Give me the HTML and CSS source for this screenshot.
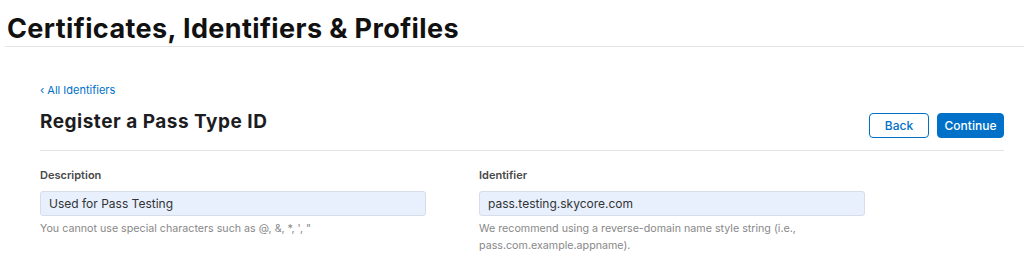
FILE: index.html
```html
<!DOCTYPE html>
<html lang="en">
<head>
<meta charset="utf-8">
<title>Register a Pass Type ID</title>
<link rel="stylesheet" href="styles.css">
</head>
<body>
<header class="top">
  <h1 class="top-title">Certificates, Identifiers &amp; Profiles</h1>
</header>
<main class="content">
  <a class="back-link" href="#">&lsaquo; All Identifiers</a>
  <div class="page-head">
    <h2 class="page-title">Register a Pass Type ID</h2>
    <div class="actions">
      <button class="btn btn-secondary" type="button">Back</button>
      <button class="btn btn-primary" type="button">Continue</button>
    </div>
  </div>
  <div class="form-grid">
    <div class="field">
      <label class="field-label">Description</label>
      <div class="field-input">Used for Pass Testing</div>
      <p class="field-help">You cannot use special characters such as @, &amp;, *, ', "</p>
    </div>
    <div class="field">
      <label class="field-label">Identifier</label>
      <div class="field-input">pass.testing.skycore.com</div>
      <p class="field-help">We recommend using a reverse-domain name style string (i.e.,<br>pass.com.example.appname).</p>
    </div>
  </div>
</main>
</body>
</html>
```
FILE: styles.css
```css
* { box-sizing: border-box; }
html, body { margin: 0; padding: 0; background: #fff; }
body {
  font-family: Inter, "Liberation Sans", Arial, sans-serif;
  color: #1d1d1f;
  width: 1024px;
  height: 262px;
  overflow: hidden;
}
.top {
  margin-left: 5px;
  border-bottom: 1px solid #e3e3e3;
  height: 47px;
  padding-top: 13px;
}
.top-title {
  margin: 0 0 0 2px;
  font-size: 27px;
  line-height: 32px;
  font-weight: 700;
  letter-spacing: 0.4px;
  color: #111;
}
.content {
  padding: 0 20px 0 40px;
}
.back-link {
  display: block;
  margin-top: 36px;
  font-size: 11px;
  line-height: 14px;
  color: #0070c9;
  text-decoration: none;
}
.page-head {
  display: flex;
  justify-content: space-between;
  align-items: flex-end;
  margin-top: 13px;
  padding-bottom: 12px;
  border-bottom: 1px solid #e3e3e3;
}
.page-title {
  margin: 0 0 4px;
  font-size: 19px;
  line-height: 24px;
  font-weight: 700;
  letter-spacing: 0.5px;
  color: #1d1d1f;
}
.actions {
  display: flex;
  gap: 8px;
}
.btn {
  font-family: inherit;
  font-size: 12px;
  font-weight: 500;
  height: 25px;
  border-radius: 4px;
  cursor: pointer;
  padding: 0;
}
.btn-secondary {
  width: 60px;
  background: #fff;
  color: #0070c9;
  border: 1px solid #0070c9;
}
.btn-primary {
  width: 67px;
  background: #0070c9;
  color: #fff;
  border: 1px solid #0070c9;
}
.form-grid {
  display: grid;
  grid-template-columns: 439px 385px;
  margin-top: 17px;
}
.field-label {
  display: block;
  font-size: 11px;
  line-height: 14px;
  font-weight: 600;
  color: #494949;
}
.field-input {
  margin-top: 9px;
  width: 386px;
  height: 25px;
  padding: 0 8px;
  background: #e8f0fe;
  border: 1px solid #d6dde8;
  border-radius: 3px;
  font-size: 12px;
  line-height: 23px;
  color: #333;
}
.field-help {
  margin: 4px 0 0;
  font-size: 10.7px;
  line-height: 17px;
  color: #888;
}
```
